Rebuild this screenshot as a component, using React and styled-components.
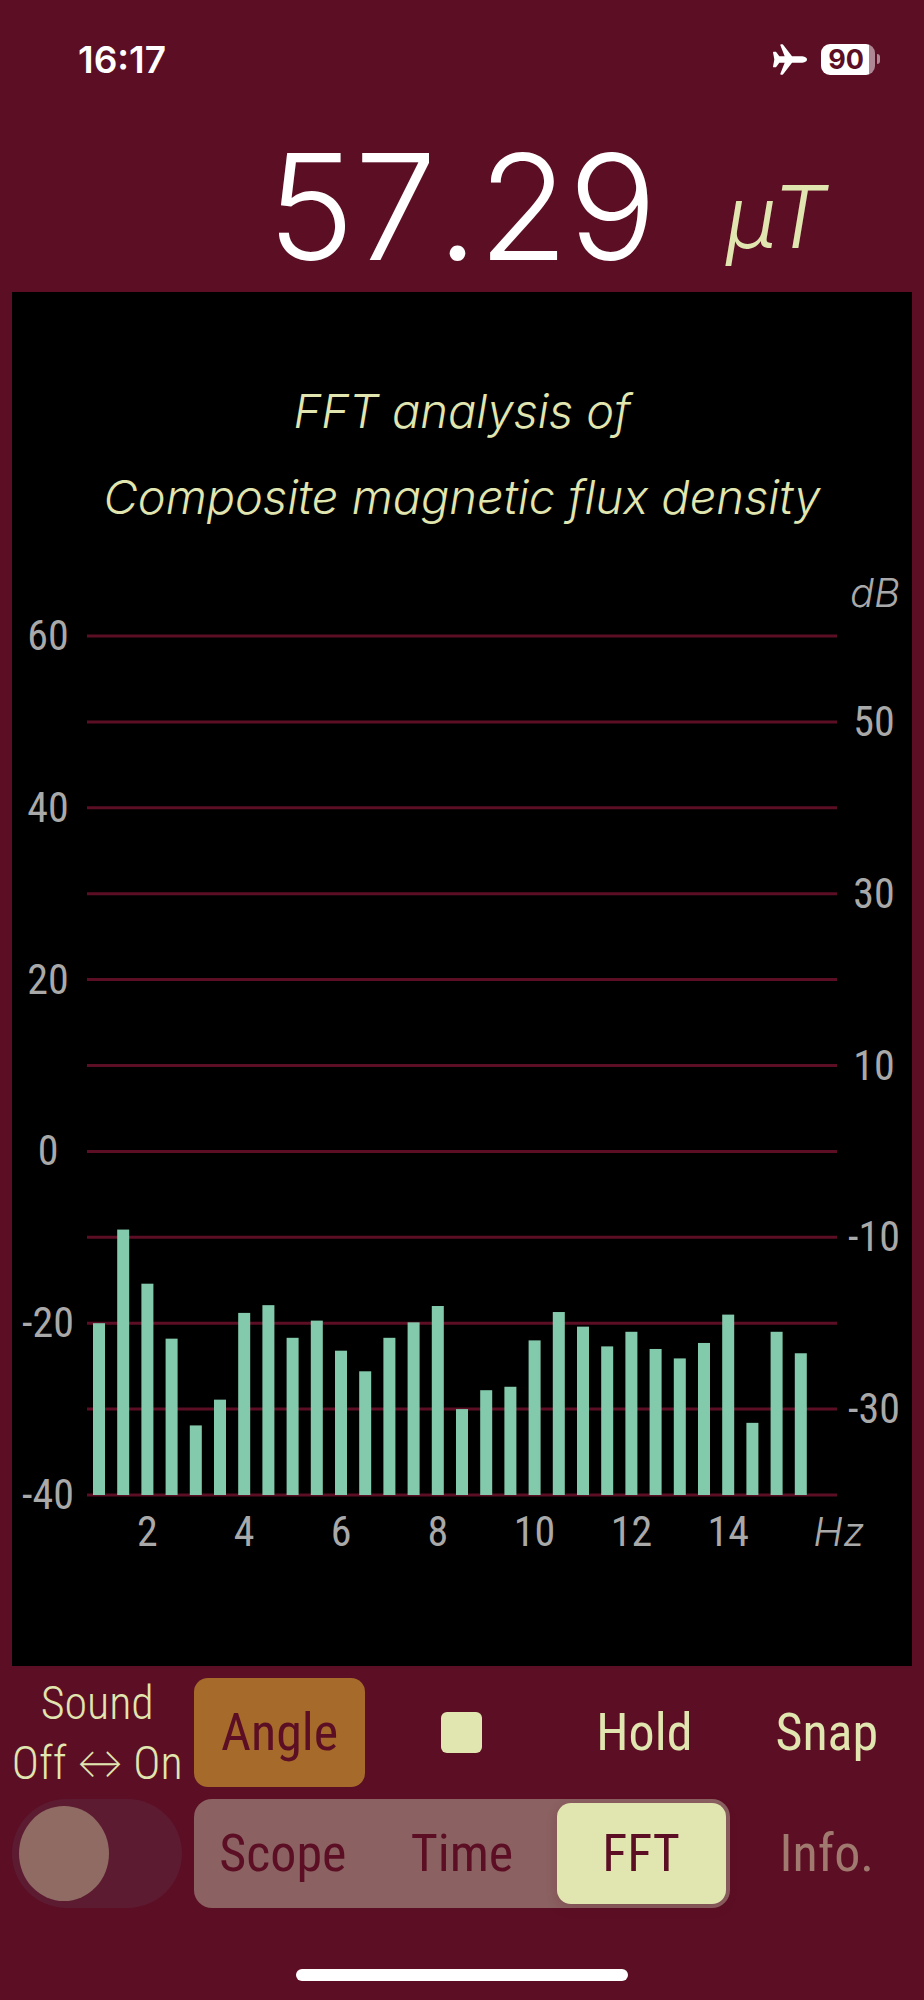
import React, { useState } from 'react';
import styled, { createGlobalStyle } from 'styled-components';

const colors = {
    wine: '#5b0e24',
    cream: '#e1e6b0',
    grey: '#a9a9a9',
    bar: '#83caad',
    amber: '#a66a2b',
    rose: '#8b6161',
}

const condensed = '"Roboto Condensed", Lato, Roboto, sans-serif';

// level of every half hertz, starting at 1 Hz
const levels = [
    -20.0, -9.1, -15.4, -21.8, -31.9, -28.9, -18.8, -17.9, -21.7, -19.7,
    -23.2, -25.6, -21.7, -19.9, -18.0, -30.0, -27.8, -27.4, -22.0, -18.7,
    -20.4, -22.7, -21.0, -23.0, -24.1, -22.3, -19.0, -31.6, -21.0, -23.5,
];

const gridLevels = [60, 50, 40, 30, 20, 10, 0, -10, -20, -30, -40];
const hertz = [2, 4, 6, 8, 10, 12, 14];

const yOf = (db) => 96 + (60 - db) * 8.59;
const xOf = (hz) => 87 + (hz - 1) * 48.4;

function Chart() {
    return (
        <ChartSvg viewBox="0 0 900 1126" role="img" aria-label="FFT analysis chart">
            {gridLevels.map((db) => (
                <GridLine key={db} x1="75" x2="825" y1={yOf(db)} y2={yOf(db)} />
            ))}
            {levels.map((db, i) => (
                <Bar key={i} x={xOf(1 + i / 2) - 6} y={yOf(db)} width="12" height={yOf(-40) - yOf(db)} />
            ))}
            {gridLevels.map((db, i) => (
                <AxisText key={db} x={i % 2 ? 862 : 36} y={yOf(db) + 14}>{db}</AxisText>
            ))}
            {hertz.map((hz) => (
                <AxisText key={hz} x={xOf(hz)} y="1006">{hz}</AxisText>
            ))}
            <UnitText x="863" y="67">dB</UnitText>
            <UnitText x="827" y="1006">Hz</UnitText>
        </ChartSvg>
    )
}

function App() {
    const [sound, setSound] = useState(false);
    const [mode, setMode] = useState('FFT');

    return (
        <Page>
            <GlobalStyle />
            <StatusBar>
                <Time>16:17</Time>
                <StatusIcons>
                    <Plane viewBox="0 0 102 91" aria-hidden="true">
                        <path d="M2 22H9L19 36H35L22 3Q21 0 25 0H28Q30 0 31 2L57 36H88Q102 38 102 45.500Q102 53 88 55H57L31 89Q30 91 28 91H25Q21 91 22 88L35 55H19L9 69H2Q0 69 0 67L4 45.500L0 24Q0 22 2 22Z" />
                    </Plane>
                    <Battery>
                        <BatteryBody>90</BatteryBody>
                        <BatteryTip />
                    </Battery>
                </StatusIcons>
            </StatusBar>
            <Readout>
                <Value>57.29</Value>
                <Unit>µT</Unit>
            </Readout>
            <Panel>
                <Title>FFT analysis of<br />Composite magnetic flux density</Title>
                <Chart />
            </Panel>
            <Controls>
                <SoundLabel htmlFor="sound">Sound<br />Off ↔ On</SoundLabel>
                <Button type="button" $filled>Angle</Button>
                <Button type="button" aria-label="Stop"><StopMark /></Button>
                <Button type="button">Hold</Button>
                <Button type="button">Snap</Button>
                <Switch
                    id="sound"
                    type="checkbox"
                    role="switch"
                    checked={sound}
                    onChange={(e) => setSound(e.target.checked)}
                />
                <Segments role="radiogroup" aria-label="View">
                    {['Scope', 'Time', 'FFT'].map((name) => (
                        <Segment key={name} $active={mode === name}>
                            <Radio
                                type="radio"
                                name="mode"
                                value={name}
                                checked={mode === name}
                                onChange={() => setMode(name)}
                            />
                            {name}
                        </Segment>
                    ))}
                </Segments>
                <Button type="button" $dim>Info.</Button>
            </Controls>
            <HomeBar />
        </Page>
    )
}

export default App;

const GlobalStyle = createGlobalStyle`
    * {
        box-sizing: border-box;
    }
    body {
        margin: 0;
        background: ${colors.wine};
    }
`

const Page = styled.main`
    display: flex;
    flex-direction: column;
    min-height: 100vh;
    background: ${colors.wine};
    font-family: ${condensed};
    color: ${colors.cream};
`

const StatusBar = styled.header`
    display: flex;
    align-items: center;
    justify-content: space-between;
    height: 118px;
    padding: 0 44px 0 78px;
    color: #fff;
    font-family: Inter, sans-serif;
`

const Time = styled.time`
    font-size: 37px;
    font-weight: 600;
`

const StatusIcons = styled.div`
    display: flex;
    align-items: center;
    gap: 14px;
`

const Plane = styled.svg`
    width: 34px;
    height: 31px;
    fill: #fff;
`

const Battery = styled.div`
    display: flex;
    align-items: center;
    gap: 2px;
`

const BatteryBody = styled.div`
    width: 54px;
    height: 31px;
    padding-right: 4px;
    border-radius: 9px;
    background: linear-gradient(to right, #fff 48px, #ae8694 48px);
    color: ${colors.wine};
    font-size: 27px;
    font-weight: 700;
    line-height: 31px;
    text-align: center;
`

const BatteryTip = styled.div`
    width: 3px;
    height: 10px;
    border-radius: 0 4px 4px 0;
    background: #ae8694;
`

const Readout = styled.section`
    display: flex;
    align-items: center;
    justify-content: flex-end;
    gap: 68px;
    height: 174px;
    padding: 4px 97px 0 0;
`

const Value = styled.span`
    color: #fff;
    font-family: Inter, sans-serif;
    font-size: 147px;
    font-weight: 300;
    font-kerning: none;
    line-height: 170px;
`

const Unit = styled.span`
    padding-top: 18px;
    font-family: Inter, sans-serif;
    font-size: 87px;
    font-style: italic;
    font-weight: 300;
`

const Panel = styled.section`
    margin: 0 12px;
    padding-top: 76px;
    background: #000;
`

const Title = styled.h1`
    margin: 0;
    font-family: Inter, sans-serif;
    font-size: 47px;
    font-style: italic;
    font-weight: 300;
    line-height: 86px;
    text-align: center;
`

const ChartSvg = styled.svg`
    display: block;
    width: 100%;
`

const GridLine = styled.line`
    stroke: ${colors.wine};
    stroke-width: 3px;
`

const Bar = styled.rect`
    fill: ${colors.bar};
`

const AxisText = styled.text`
    fill: ${colors.grey};
    font-family: ${condensed};
    font-size: 42px;
    text-anchor: middle;
`

const UnitText = styled(AxisText)`
    font-family: Inter, sans-serif;
    font-size: 40px;
    font-style: italic;
    font-weight: 300;
`

const Controls = styled.section`
    display: grid;
    grid-template-columns: repeat(5, minmax(0, 1fr));
    grid-auto-rows: 109px;
    gap: 12px;
    padding: 12px;
`

const SoundLabel = styled.label`
    display: flex;
    align-items: center;
    justify-content: center;
    font-size: 46px;
    font-weight: 300;
    line-height: 60px;
    text-align: center;
    white-space: nowrap;
`

const Button = styled.button`
    display: flex;
    align-items: center;
    justify-content: center;
    padding: 0;
    border: none;
    border-radius: 14px;
    background: ${(p) => (p.$filled ? colors.amber : 'transparent')};
    color: ${(p) => (p.$filled ? colors.wine : p.$dim ? '#a07a6e' : colors.cream)};
    font-family: ${condensed};
    font-size: 52px;
    cursor: pointer;
`

const StopMark = styled.span`
    width: 41px;
    height: 41px;
    border-radius: 6px;
    background: ${colors.cream};
`

const Switch = styled.input`
    display: flex;
    align-items: center;
    justify-content: ${(p) => (p.checked ? 'flex-end' : 'flex-start')};
    appearance: none;
    margin: 0;
    padding: 0 7px;
    border-radius: 55px;
    background: #5d1b32;
    cursor: pointer;

    &::before {
        content: "";
        width: 90px;
        height: 95px;
        border-radius: 50%;
        background: #8f6b63;
    }
`

const Segments = styled.div`
    grid-column: span 3;
    display: grid;
    grid-template-columns: repeat(3, 1fr);
    gap: 10px;
    padding: 4px;
    border-radius: 18px;
    background: ${colors.rose};
`

const Segment = styled.label`
    display: flex;
    align-items: center;
    justify-content: center;
    border-radius: 14px;
    background: ${(p) => (p.$active ? colors.cream : 'transparent')};
    box-shadow: ${(p) => (p.$active ? '0 4px 12px rgba(91, 14, 36, 0.2)' : 'none')};
    color: ${colors.wine};
    font-size: 52px;
    cursor: pointer;
`

const Radio = styled.input`
    appearance: none;
    width: 0;
    height: 0;
    margin: 0;
`

const HomeBar = styled.div`
    width: 36%;
    height: 12px;
    margin: 49px auto 20px;
    border-radius: 6px;
    background: #fff;
`
